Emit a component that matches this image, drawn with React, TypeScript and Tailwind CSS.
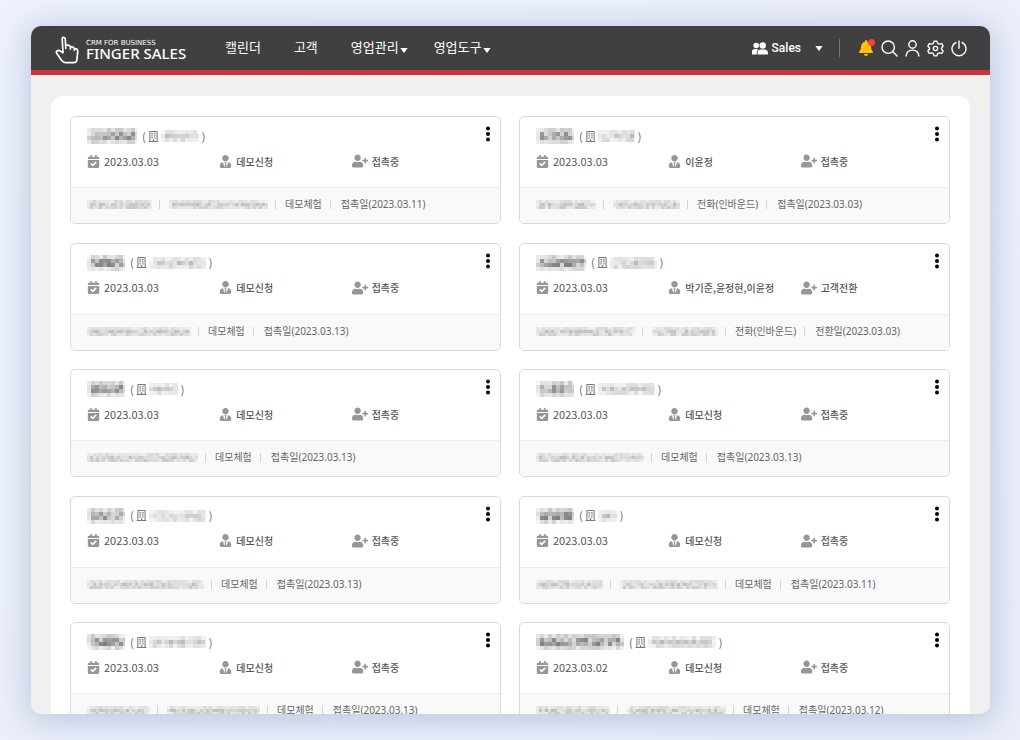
import type { ReactNode } from "react";
import { FaBell, FaCalendarCheck, FaRegBuilding, FaUserPlus, FaUserTie } from "react-icons/fa";

type Lead = {
  name: number;
  company: number;
  date: string;
  owner: string;
  status: string;
  contacts: number[];
  source: string;
  last: string;
};

// Personal details are masked; the numbers are the widths of the masks.
const leads: Lead[] = [
  { name: 50, company: 38, date: "2023.03.03", owner: "데모신청", status: "접촉중", contacts: [65, 99], source: "데모체험", last: "접촉일(2023.03.11)" },
  { name: 38, company: 37, date: "2023.03.03", owner: "이윤정", status: "접촉중", contacts: [60, 67], source: "전화(인바운드)", last: "접촉일(2023.03.03)" },
  { name: 38, company: 57, date: "2023.03.03", owner: "데모신청", status: "접촉중", contacts: [104], source: "데모체험", last: "접촉일(2023.03.13)" },
  { name: 50, company: 47, date: "2023.03.03", owner: "박기준,윤정현,이윤정", status: "고객전환", contacts: [99, 66], source: "전화(인바운드)", last: "전환일(2023.03.03)" },
  { name: 38, company: 29, date: "2023.03.03", owner: "데모신청", status: "접촉중", contacts: [111], source: "데모체험", last: "접촉일(2023.03.13)" },
  { name: 38, company: 57, date: "2023.03.03", owner: "데모신청", status: "접촉중", contacts: [108], source: "데모체험", last: "접촉일(2023.03.13)" },
  { name: 38, company: 57, date: "2023.03.03", owner: "데모신청", status: "접촉중", contacts: [117], source: "데모체험", last: "접촉일(2023.03.13)" },
  { name: 38, company: 19, date: "2023.03.03", owner: "데모신청", status: "접촉중", contacts: [67, 98], source: "데모체험", last: "접촉일(2023.03.11)" },
  { name: 38, company: 57, date: "2023.03.03", owner: "데모신청", status: "접촉중", contacts: [63, 93], source: "데모체험", last: "접촉일(2023.03.13)" },
  { name: 88, company: 68, date: "2023.03.02", owner: "데모신청", status: "접촉중", contacts: [74, 99], source: "데모체험", last: "접촉일(2023.03.12)" },
];

function Mask({ width, tone, seed }: { width: number; tone: "name" | "company" | "contact"; seed: number }) {
  const cell = tone === "contact" ? 3 : 4;
  const rows = tone === "name" ? [0.45, 0.95, 1, 0.4] : tone === "company" ? [0.5, 1, 0.6] : [0.55, 1, 0.8];
  const strength = tone === "name" ? 0.66 : tone === "company" ? 0.36 : 0.32;
  const cols = Math.ceil(width / cell);
  let s = seed * 7919 + width * 131 + 17;
  const next = () => {
    s = (s * 16807) % 2147483647;
    return s / 2147483647;
  };
  next();
  next();
  const cells: ReactNode[] = [];
  for (let c = 0; c < cols; c++) {
    for (let r = 0; r < rows.length; r++) {
      const edge = c === 0 || c === cols - 1 ? 0.5 : 1;
      const o = strength * rows[r] * edge * (0.3 + 0.7 * next());
      cells.push(<rect key={c + "-" + r} x={c * cell} y={r * cell} width={cell} height={cell} fill="#3c3c3c" fillOpacity={o} />);
    }
  }
  return (
    <svg role="img" aria-label="비공개" width={width} height={rows.length * cell} className="shrink-0" shapeRendering="crispEdges">
      {cells}
    </svg>
  );
}

function LeadCard({ lead, index }: { lead: Lead; index: number }) {
  return (
    <article className="overflow-hidden rounded-[5px] border border-[#d9d9d9] bg-white">
      <div className="relative px-4 pt-[9px] pb-4">
        <h2 className="flex h-5 items-center text-[11px] text-[#666]">
          <Mask width={lead.name} tone="name" seed={index + 1} />
          <span className="ml-[5px]">(</span>
          <FaRegBuilding className="ml-[2px] size-[11px] text-[#777]" />
          <span className="ml-[2px] flex items-center">
            <Mask width={lead.company} tone="company" seed={index + 31} />
          </span>
          <span className="ml-[3px]">)</span>
        </h2>
        <button type="button" aria-label="더보기" className="absolute top-2 right-[9px] flex h-[18px] w-[6px] items-center justify-center text-black">
          <svg width="4" height="16" viewBox="0 0 4 16" fill="currentColor">
            <circle cx="2" cy="2.6" r="2" />
            <circle cx="2" cy="8" r="2" />
            <circle cx="2" cy="13.4" r="2" />
          </svg>
        </button>
        <div className="mt-[5px] grid h-5 grid-cols-3 items-center text-[10px] font-medium whitespace-nowrap text-[#555]">
          <span className="flex items-center gap-1">
            <FaCalendarCheck className="size-[13px] text-[#969696]" />
            <time className="text-[11px] font-normal">{lead.date}</time>
          </span>
          <span className="flex items-center gap-1">
            <FaUserTie className="size-[13px] text-[#969696]" />
            {lead.owner}
          </span>
          <span className="flex items-center gap-1">
            <FaUserPlus className="size-4 text-[#969696]" />
            {lead.status}
          </span>
        </div>
      </div>
      <div className="flex h-9 items-center border-t border-[#ececec] bg-[#f9f9f9] px-4 pb-[2px] font-['Noto_Sans','Noto_Sans_CJK_KR',sans-serif] text-[10px] whitespace-nowrap text-[#666]">
        {lead.contacts.map((w, i) => (
          <span key={i} className="flex items-center">
            <Mask width={w} tone="contact" seed={index * 3 + i + 61} />
            <Separator className="mr-[9px] ml-[7px]" />
          </span>
        ))}
        <span>{lead.source}</span>
        <Separator className="mr-[10px] ml-2" />
        <span>{lead.last}</span>
      </div>
    </article>
  );
}

function Separator({ className }: { className: string }) {
  return <span className={"h-[9px] w-px bg-[#d4d4d4] " + className} />;
}

function Caret({ className }: { className: string }) {
  return (
    <svg width="8" height="5" viewBox="0 0 8 5" fill="currentColor" className={className}>
      <path d="M0.3 0h7.4L4 5z" />
    </svg>
  );
}

function Logo() {
  return (
    <a href="#" className="flex w-[170px] items-center gap-[7px] text-white">
      <svg width="24" height="28" viewBox="0 0 24 28" fill="none" stroke="currentColor" strokeWidth="1.7" strokeLinejoin="round" strokeLinecap="round" className="mt-[3px]">
        <path d="M10.8 12.5 10.3 3.2Q10 1.2 8.5 1.3 7 1.4 7.2 3.3L8 16.8 5.4 15.1Q3.3 13.9 2 15 .8 16.1 1.8 17.5L6.7 24.4Q8.2 26.7 11 26.7H18.6Q21.3 26.7 21.8 24.1L22.7 16.1Q22.9 13.1 20.8 12.8L19.3 12.6V14.2M19.3 12.6Q19 11.3 17 10.9L15.4 10.7V13M15.4 10.7Q14.7 9.2 12.8 9.1L10.8 9" />
      </svg>
      <span className="flex flex-col pt-[3px] whitespace-nowrap">
        <span className="font-['DejaVu_Sans'] text-[7px] leading-[8px]">CRM FOR BUSINESS</span>
        <span className="font-['Noto_Sans'] text-[15px] leading-[13px] font-medium">FINGER SALES</span>
      </span>
    </a>
  );
}

export default function App() {
  return (
    <div className="h-screen bg-[#edf1fa] bg-linear-to-br from-[#eef2fc] to-[#eaeef8] pt-[26px] pr-[30px] pb-[26px] pl-[31px] font-['Noto_Sans_CJK_KR',sans-serif]">
      <div className="flex h-full flex-col overflow-hidden rounded-[10px] bg-[#f0f0f0] shadow-[0_4px_32px_4px_rgba(100,125,175,0.35)]">
        <header className="flex h-[49px] shrink-0 items-center border-b-[5px] border-[#cb3533] bg-[#404040] pr-[23px] pl-6 text-white">
          <Logo />
          <nav className="flex items-center pb-[2px] text-[13px] leading-5 whitespace-nowrap">
            <a href="#">캘린더</a>
            <a href="#" className="ml-[33px]">고객</a>
            <a href="#" className="ml-[33px] flex items-center gap-px">
              영업관리
              <Caret className="mt-[6px]" />
            </a>
            <a href="#" className="ml-[26px] flex items-center gap-px">
              영업도구
              <Caret className="mt-[6px]" />
            </a>
          </nav>
          <div className="ml-auto flex items-center">
            <button type="button" className="flex items-center font-['Roboto'] text-[12px] font-medium">
              <svg width="16" height="13" viewBox="0 0 16 13" fill="currentColor">
                <circle cx="4.2" cy="3.5" r="2.8" />
                <path d="M0 12.4V9.6Q0 7 2.8 7H5.2Q6 7 6.3 7.4 4.8 8.4 4.8 10.4V12.4z" />
                <circle cx="10.7" cy="3.5" r="3.2" />
                <path d="M5.6 12.4V10.4Q5.8 7.4 8.8 7.4H12.6Q15.6 7.4 15.9 10.4V12.4z" />
              </svg>
              <span className="ml-1">Sales</span>
              <Caret className="ml-[14px]" />
            </button>
            <span className="mr-[18px] ml-4 h-[18px] w-px bg-[#767676]" />
            <div className="flex items-center gap-[7px]">
              <button type="button" aria-label="알림" className="relative">
                <FaBell className="size-4 text-[#ffc107]" />
                <span className="absolute -top-px -right-px size-[7px] rounded-full bg-[#f8423a]" />
              </button>
              <button type="button" aria-label="검색">
                <svg width="17" height="17" viewBox="0 0 17 17" fill="none" stroke="currentColor" strokeWidth="1.4" strokeLinecap="round">
                  <circle cx="7.2" cy="7.2" r="6.2" />
                  <path d="m11.8 11.8 4.300 4.300" />
                </svg>
              </button>
              <button type="button" aria-label="내 정보">
                <svg width="15" height="17" viewBox="0 0 15 17" fill="none" stroke="currentColor" strokeWidth="1.4" strokeLinecap="round">
                  <circle cx="7.5" cy="4.5" r="3.7" />
                  <path d="M1.2 16v-.4Q1.800 10.100 7.500 10.100t6.300 5.500v.4" />
                </svg>
              </button>
              <button type="button" aria-label="설정">
                <svg width="17" height="17" viewBox="0 0 24 24" fill="none" stroke="currentColor" strokeWidth="1.9" strokeLinejoin="round">
                  <path d="M10.2 1.5h3.6l1.4 3.4 1.8 1 3.9-.7 1.9 3.3-2.4 2.8v1.400l2.400 2.800-1.900 3.300-3.900-.7-1.800 1-1.400 3.400h-3.600l-1.400-3.400-1.800-1-3.900.7-1.900-3.300 2.400-2.800v-1.400L1.200 8.500l1.900-3.300 3.900.7 1.800-1z" />
                  <circle cx="12" cy="12" r="3" />
                </svg>
              </button>
              <button type="button" aria-label="로그아웃">
                <svg width="16" height="17" viewBox="0 0 16 17" fill="none" stroke="currentColor" strokeWidth="1.4" strokeLinecap="round">
                  <path d="M8 1v7.200M4.900 2.500a7 7 0 1 0 6.200 0" />
                </svg>
              </button>
            </div>
          </div>
        </header>
        <main className="min-h-0 flex-1 overflow-hidden px-5 pt-[21px]">
          <section className="rounded-xl bg-white py-5 pr-5 pl-[19px]">
            <div className="grid min-h-[614px] grid-cols-2 content-between gap-x-[18px]">
              {leads.map((lead, i) => (
                <LeadCard key={i} lead={lead} index={i} />
              ))}
            </div>
          </section>
        </main>
      </div>
    </div>
  );
}
